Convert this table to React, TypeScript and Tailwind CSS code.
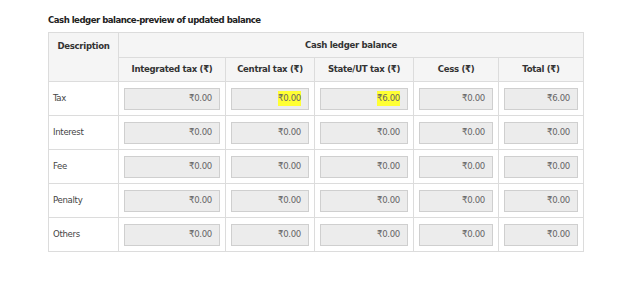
const cols = [
  { label: "Integrated tax (₹)", w: "w-[107px]" },
  { label: "Central tax (₹)", w: "w-[89px]" },
  { label: "State/UT tax (₹)", w: "w-[99px]" },
  { label: "Cess (₹)", w: "w-[85px]" },
  { label: "Total (₹)", w: "w-[85px]" },
];

const rows: { name: string; values: string[]; hl?: number[] }[] = [
  { name: "Tax", values: ["₹0.00", "₹0.00", "₹6.00", "₹0.00", "₹6.00"], hl: [1, 2] },
  { name: "Interest", values: ["₹0.00", "₹0.00", "₹0.00", "₹0.00", "₹0.00"] },
  { name: "Fee", values: ["₹0.00", "₹0.00", "₹0.00", "₹0.00", "₹0.00"] },
  { name: "Penalty", values: ["₹0.00", "₹0.00", "₹0.00", "₹0.00", "₹0.00"] },
  { name: "Others", values: ["₹0.00", "₹0.00", "₹0.00", "₹0.00", "₹0.00"] },
];

export default function App() {
  return (
    <div className="w-[630px] h-[282px] bg-white pl-[48px] pt-[14px] text-[#333] font-['DejaVu_Sans_Condensed',sans-serif] text-[9.5px] tracking-[-0.3px]">
      <h4 className="font-bold text-[9.5px] leading-[12px] mb-[6px] text-[#222] tracking-[-0.5px]">
        Cash ledger balance-preview of updated balance
      </h4>
      <table className="table-fixed border-collapse border border-[#dcdcdc] w-[535px]">
        <colgroup>
          <col className="w-[70px]" />
          {cols.map((c) => (
            <col key={c.label} className={c.w} />
          ))}
        </colgroup>
        <thead className="bg-[#f5f5f5]">
          <tr className="h-[25px]">
            <th rowSpan={2} className="border border-[#dcdcdc] align-top pt-[6px] font-bold text-[#333]">
              Description
            </th>
            <th colSpan={5} className="border border-[#dcdcdc] font-bold text-[#333]">
              Cash ledger balance
            </th>
          </tr>
          <tr className="h-[24px]">
            {cols.map((c) => (
              <th key={c.label} className="border border-[#dcdcdc] font-bold text-[#333]">
                {c.label}
              </th>
            ))}
          </tr>
        </thead>
        <tbody>
          {rows.map((r) => (
            <tr key={r.name} className="h-[34px]">
              <td className="border border-[#dcdcdc] px-[4px] text-[#444]">{r.name}</td>
              {r.values.map((v, i) => (
                <td key={i} className="border border-[#dcdcdc] px-[5px]">
                  <div className="h-[22px] bg-[#ececec] border border-[#cfcfcf] flex items-center justify-end pr-[7px] text-[#666]">
                    <span className={r.hl?.includes(i) ? "bg-[#ffff33]" : ""}>{v}</span>
                  </div>
                </td>
              ))}
            </tr>
          ))}
        </tbody>
      </table>
    </div>
  );
}
